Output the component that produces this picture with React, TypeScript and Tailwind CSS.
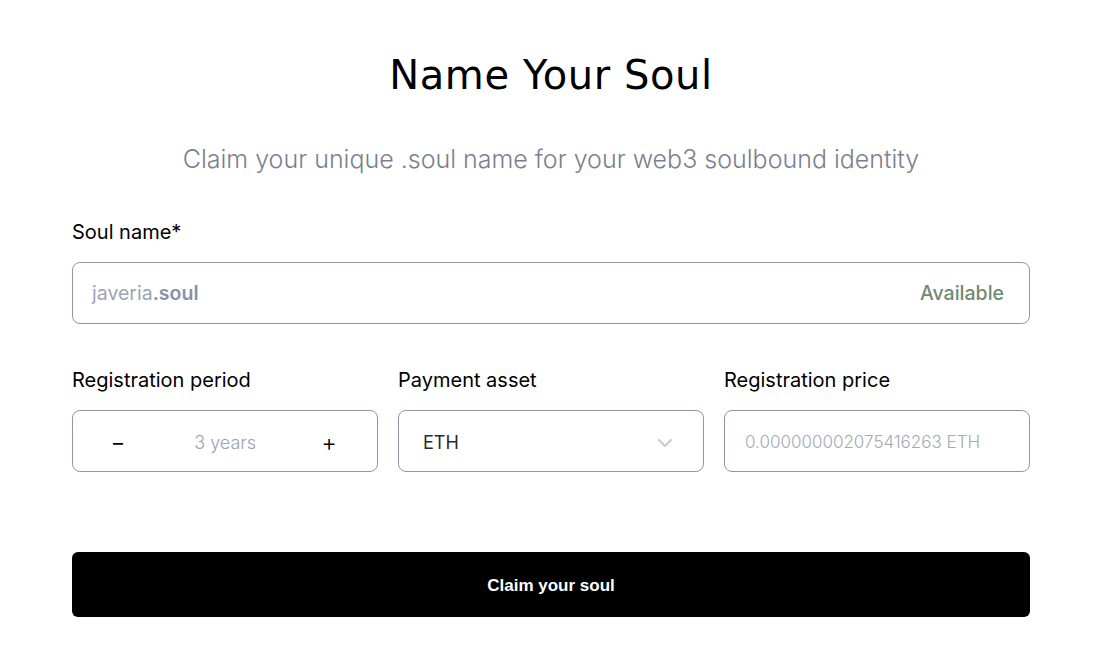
import React from "react";

const App: React.FC = () => {
  return (
    <div className="min-h-[651px] w-full bg-white font-['Inter',sans-serif]">
      <div className="ml-[72px] w-[958px] pt-[52px]">
        <h1 className="text-center font-['DejaVu_Sans',sans-serif] text-[40px] leading-[46px] tracking-[0.6px] text-black">
          Name Your Soul
        </h1>
        <p className="mt-[45px] text-center text-[25px] font-light leading-[32px] text-[#7b808e]">
          Claim your unique .soul name for your web3 soulbound identity
        </p>

        <div className="mt-[43px]">
          <label className="block text-[20px] leading-[28px] text-black">Soul name*</label>
          <div className="mt-[16px] flex h-[62px] items-center justify-between rounded-[8px] border border-[#8c97a9] pl-[19px] pr-[20px] pt-[2px] text-[19.5px]">
            <span className="text-[#9ca4b4]">
              javeria<span className="font-semibold text-[#8792a6]">.soul</span>
            </span>
            <span className="pr-[5px] font-medium text-[#6f8b70]">Available</span>
          </div>
        </div>

        <div className="mt-[42px] grid grid-cols-3 gap-x-[20px]">
          <div>
            <label className="block text-[20px] leading-[28px] text-black">Registration period</label>
            <div className="mt-[16px] flex h-[62px] items-center justify-between rounded-[8px] border border-[#8c97a9] pl-[40px] pr-[40px] pt-[3px] text-[18px]">
              <span className="text-[20px] text-black">–</span>
              <span className="pl-[6px] font-light text-[#98a1b2]">3 years</span>
              <span className="text-[24px] font-light text-black">+</span>
            </div>
          </div>
          <div>
            <label className="block text-[20px] leading-[28px] text-black">Payment asset</label>
            <div className="mt-[16px] flex h-[62px] items-center justify-between rounded-[8px] border border-[#8c97a9] pl-[24px] pr-[30px] pt-[3px] text-[18px]">
              <span className="text-[#2a2a2a]">ETH</span>
              <svg width="16" height="10" viewBox="0 0 16 10" fill="none">
                <path d="M2 2l6 6 6-6" stroke="#c5c9d0" strokeWidth="2" strokeLinecap="round" strokeLinejoin="round" />
              </svg>
            </div>
          </div>
          <div>
            <label className="block text-[20px] leading-[28px] text-black">Registration price</label>
            <div className="mt-[16px] flex h-[62px] items-center rounded-[8px] border border-[#8c97a9] px-[20px] pt-[3px] text-[17px]">
              <span className="font-light text-[#a4aab5]">0.000000002075416263 ETH</span>
            </div>
          </div>
        </div>

        <button className="mt-[80px] flex h-[65px] w-full items-center justify-center rounded-[6px] bg-black pt-[2px] font-['Liberation_Sans',sans-serif] text-[17px] font-bold text-white">
          Claim your soul
        </button>
      </div>
    </div>
  );
};

export default App;
